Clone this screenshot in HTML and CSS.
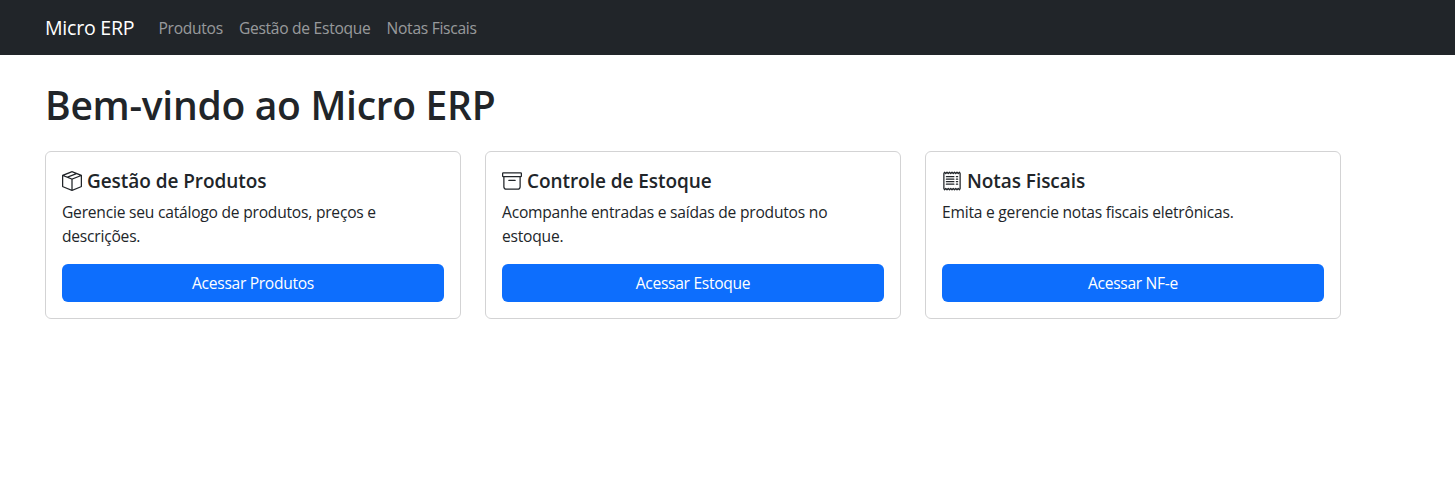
FILE: index.html
```html
<!DOCTYPE html>
<html lang="pt-BR">
<head>
<meta charset="utf-8">
<title>Micro ERP</title>
<link rel="stylesheet" href="styles.css">
</head>
<body>
<nav class="navbar">
  <div class="container nav-row">
    <a class="brand">Micro ERP</a>
    <a class="nav-link">Produtos</a>
    <a class="nav-link">Gestão de Estoque</a>
    <a class="nav-link">Notas Fiscais</a>
  </div>
</nav>
<main class="container main">
  <h1 class="title">Bem-vindo ao Micro ERP</h1>
  <div class="cards">
    <section class="card">
      <h5 class="card-title"><svg class="icon" viewBox="0 0 16 16"><path d="M8.186 1.113a.5.5 0 0 0-.372 0L1.846 3.5l2.404.961L10.404 2zm3.564 1.426L5.596 5 8 5.961 14.154 3.5zm3.25 1.7-6.5 2.6v7.922l6.5-2.6V4.24zM7.5 14.762V6.838L1 4.239v7.923zM7.443.184a1.5 1.5 0 0 1 1.114 0l7.129 2.852A.5.5 0 0 1 16 3.5v8.662a1 1 0 0 1-.629.928l-7.185 2.874a.5.5 0 0 1-.372 0L.63 13.09a1 1 0 0 1-.63-.928V3.5a.5.5 0 0 1 .314-.464z"/></svg>Gestão de Produtos</h5>
      <p class="card-text">Gerencie seu catálogo de produtos, preços e descrições.</p>
      <a class="btn">Acessar Produtos</a>
    </section>
    <section class="card">
      <h5 class="card-title"><svg class="icon" viewBox="0 0 16 16"><path d="M0 2a1 1 0 0 1 1-1h14a1 1 0 0 1 1 1v2a1 1 0 0 1-1 1v7.5a2.5 2.5 0 0 1-2.5 2.5h-9A2.5 2.5 0 0 1 1 12.5V5a1 1 0 0 1-1-1zm2 3v7.5A1.5 1.5 0 0 0 3.5 14h9a1.5 1.5 0 0 0 1.5-1.5V5zm13-3H1v2h14zM5 7.5a.5.5 0 0 1 .5-.5h5a.5.5 0 0 1 0 1h-5a.5.5 0 0 1-.5-.5"/></svg>Controle de Estoque</h5>
      <p class="card-text">Acompanhe entradas e saídas de produtos no estoque.</p>
      <a class="btn">Acessar Estoque</a>
    </section>
    <section class="card">
      <h5 class="card-title"><svg class="icon" viewBox="0 0 16 16"><path d="M1.92.506a.5.5 0 0 1 .434.14L3 1.293l.646-.647a.5.5 0 0 1 .708 0L5 1.293l.646-.647a.5.5 0 0 1 .708 0L7 1.293l.646-.647a.5.5 0 0 1 .708 0L9 1.293l.646-.647a.5.5 0 0 1 .708 0l.646.647.646-.647a.5.5 0 0 1 .708 0l.646.647.646-.647a.5.5 0 0 1 .801.13l.5 1A.5.5 0 0 1 15 2v12a.5.5 0 0 1-.053.224l-.5 1a.5.5 0 0 1-.8.13L13 14.707l-.646.647a.5.5 0 0 1-.708 0L11 14.707l-.646.647a.5.5 0 0 1-.708 0L9 14.707l-.646.647a.5.5 0 0 1-.708 0L7 14.707l-.646.647a.5.5 0 0 1-.708 0L5 14.707l-.646.647a.5.5 0 0 1-.708 0L3 14.707l-.646.647a.5.5 0 0 1-.801-.13l-.5-1A.5.5 0 0 1 1 14V2a.5.5 0 0 1 .053-.224l.5-1a.5.5 0 0 1 .367-.27m.217 1.338L2 2.118v11.764l.137.274.51-.51a.5.5 0 0 1 .707 0l.646.647.646-.646a.5.5 0 0 1 .708 0l.646.646.646-.646a.5.5 0 0 1 .708 0l.646.646.646-.646a.5.5 0 0 1 .708 0l.646.646.646-.646a.5.5 0 0 1 .708 0l.646.646.646-.646a.5.5 0 0 1 .708 0l.509.509.137-.274V2.118l-.137-.274-.51.51a.5.5 0 0 1-.707 0L12 1.707l-.646.647a.5.5 0 0 1-.708 0L10 1.707l-.646.647a.5.5 0 0 1-.708 0L8 1.707l-.646.647a.5.5 0 0 1-.708 0L6 1.707l-.646.647a.5.5 0 0 1-.708 0L4 1.707l-.646.647a.5.5 0 0 1-.708 0z"/><path d="M3 4.5a.5.5 0 0 1 .5-.5h6a.5.5 0 1 1 0 1h-6a.5.5 0 0 1-.5-.5m0 2a.5.5 0 0 1 .5-.5h6a.5.5 0 1 1 0 1h-6a.5.5 0 0 1-.5-.5m0 2a.5.5 0 0 1 .5-.5h6a.5.5 0 1 1 0 1h-6a.5.5 0 0 1-.5-.5m0 2a.5.5 0 0 1 .5-.5h6a.5.5 0 0 1 0 1h-6a.5.5 0 0 1-.5-.5m8-6a.5.5 0 0 1 .5-.5h1a.5.5 0 0 1 0 1h-1a.5.5 0 0 1-.5-.5m0 2a.5.5 0 0 1 .5-.5h1a.5.5 0 0 1 0 1h-1a.5.5 0 0 1-.5-.5m0 2a.5.5 0 0 1 .5-.5h1a.5.5 0 0 1 0 1h-1a.5.5 0 0 1-.5-.5m0 2a.5.5 0 0 1 .5-.5h1a.5.5 0 0 1 0 1h-1a.5.5 0 0 1-.5-.5"/></svg>Notas Fiscais</h5>
      <p class="card-text">Emita e gerencie notas fiscais eletrônicas.</p>
      <a class="btn">Acessar NF-e</a>
    </section>
  </div>
</main>
</body>
</html>
```
FILE: styles.css
```css
* { box-sizing: border-box; }
body { margin: 0; background: #fff; color: #212529; font: 400 15.6px/24px "Open Sans", "Noto Sans", sans-serif; letter-spacing: -0.19px; }
.container { width: 1296px; margin-left: 45px; }
.navbar { height: 55px; background: #212529; }
.nav-row { display: flex; align-items: center; height: 55px; }
.brand { width: 89px; margin-right: 24.5px; font-size: 19.6px; line-height: 30px; letter-spacing: -0.25px; color: #fff; white-space: nowrap; }
.nav-link { margin-right: 16px; color: rgba(255, 255, 255, .55); letter-spacing: -0.28px; white-space: nowrap; }
.main { padding-top: 26px; }
.title { margin: 0 0 22px; font-size: 39px; line-height: 48px; font-weight: 600; letter-spacing: -0.29px; }
.cards { display: grid; grid-template-columns: repeat(3, 1fr); gap: 24px; }
.card { display: flex; flex-direction: column; height: 168px; padding: 17px 16px 16px; border: 1px solid #d3d3d4; border-radius: 6px; }
.card-title { display: flex; align-items: center; gap: 5px; height: 24px; margin: 0 0 7px; font-size: 19px; line-height: 24px; font-weight: 600; letter-spacing: -0.06px; }
.icon { width: 20px; height: 20px; fill: currentColor; flex: none; }
.card-text { margin: 0; letter-spacing: -0.22px; }
.btn { margin-top: auto; height: 38px; border-radius: 6px; background: #0d6efd; color: #fff; line-height: 38px; text-align: center; letter-spacing: -0.3px; }
```
